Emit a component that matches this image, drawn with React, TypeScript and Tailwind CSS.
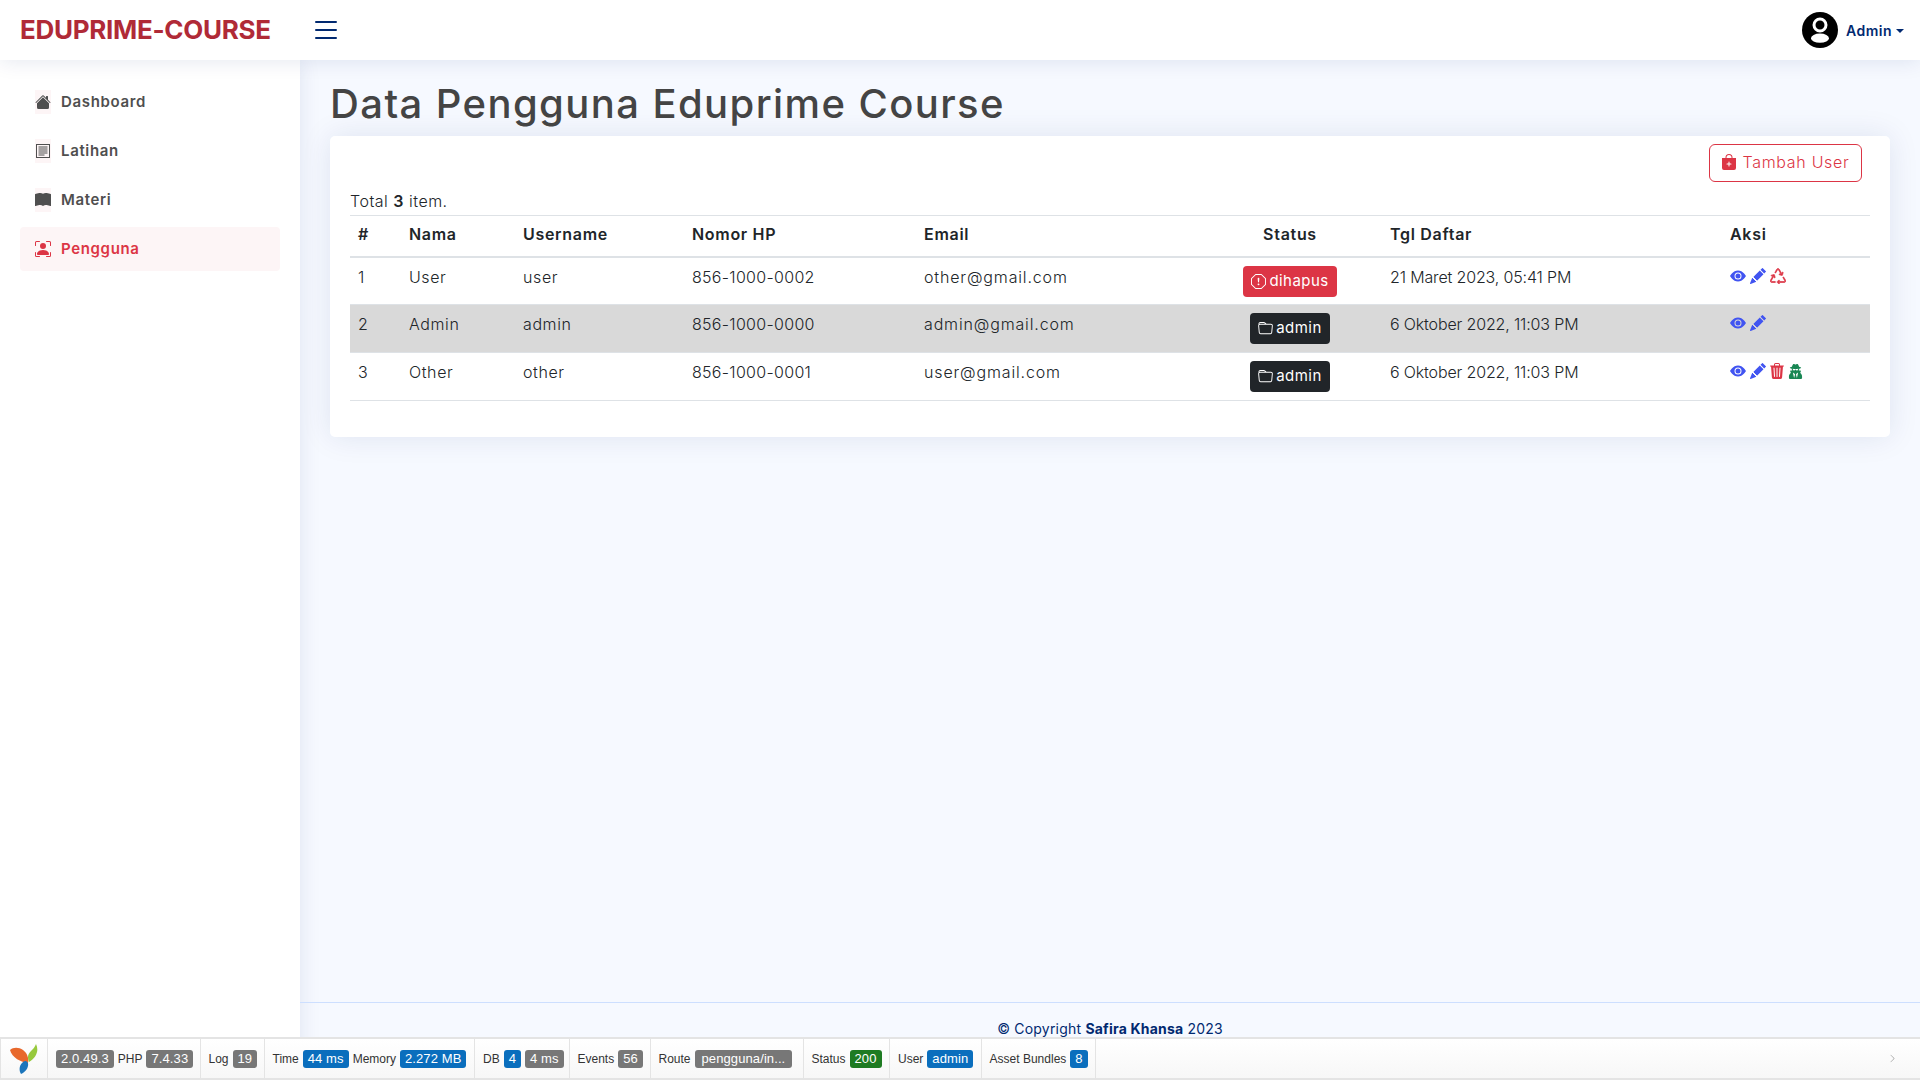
import {
  BsBagPlusFill,
  BsBookFill,
  BsChevronRight,
  BsEyeFill,
  BsExclamationOctagon,
  BsFolder,
  BsHouseFill,
  BsList,
  BsPencilFill,
  BsPersonBoundingBox,
  BsRecycle,
  BsTrash3Fill,
} from 'react-icons/bs';
import { FaUserSecret } from 'react-icons/fa';

function LatihanIcon({ className }: { className?: string }) {
  return (
    <svg viewBox="0 0 16 16" className={className} fill="none" stroke="currentColor">
      <rect x="1.5" y="1.5" width="13" height="13" strokeWidth="1" />
      <path d="M3.5 4h9M3.5 6h9M3.5 8h9M3.5 10h9M3.5 12h6" strokeWidth="1" />
    </svg>
  );
}

const menu = [
  { label: 'Dashboard', icon: BsHouseFill },
  { label: 'Latihan', icon: LatihanIcon },
  { label: 'Materi', icon: BsBookFill },
  { label: 'Pengguna', icon: BsPersonBoundingBox, active: true },
];

const rows = [
  { no: 1, nama: 'User', username: 'user', hp: '856-1000-0002', email: 'other@gmail.com', status: 'dihapus', tgl: '21 Maret 2023, 05:41 PM' },
  { no: 2, nama: 'Admin', username: 'admin', hp: '856-1000-0000', email: 'admin@gmail.com', status: 'admin', tgl: '6 Oktober 2022, 11:03 PM' },
  { no: 3, nama: 'Other', username: 'other', hp: '856-1000-0001', email: 'user@gmail.com', status: 'admin', tgl: '6 Oktober 2022, 11:03 PM' },
];

function YiiLogo() {
  return (
    <svg width="28" height="30" viewBox="0 0 28 30">
      <path d="M0 6 C3 3 9 3 13 6 C17 9 19 14 18 19 C11 18 2 14 0 6Z" fill="#e8682c" />
      <path d="M26 0 C29 6 27 13 19 18 C17 13 18 10 21 7 C23 5 25 3 26 0Z" fill="#97c93d" />
      <path d="M18 19 C19 24 15 28 11 30 C9 27 9 22 12 19 C14 17 16 16 18 19Z" fill="#1b75bb" />
    </svg>
  );
}

function UserAvatar() {
  return (
    <svg width="36" height="36" viewBox="0 0 36 36" className="shrink-0">
      <circle cx="18" cy="18" r="18" fill="#000000" />
      <circle cx="18" cy="13" r="6" fill="#000000" stroke="#ffffff" strokeWidth="3" />
      <ellipse cx="18" cy="26.2" rx="9" ry="4.6" fill="#ffffff" />
    </svg>
  );
}

function Badge({ color, wide, children }: { color: 'gray' | 'blue' | 'green'; wide?: boolean; children: React.ReactNode }) {
  const bg = color === 'gray' ? 'bg-[#777777]' : color === 'blue' ? 'bg-[#0a6ebd]' : 'bg-[#1e7b22]';
  return (
    <span className={`${bg} rounded-[3px] ${wide ? 'px-[7px]' : 'px-[5px]'} text-[13px] leading-[18px] text-white tracking-[0.1px]`}>
      {children}
    </span>
  );
}

function Block({ children, className = '' }: { children: React.ReactNode; className?: string }) {
  return <div className={`flex h-full shrink-0 items-center gap-[4px] border-r border-[#e4e4e4] pl-[8px] ${className}`}>{children}</div>;
}

export default function App() {
  return (
    <div className="relative flex h-screen flex-col overflow-hidden bg-[#f6f9ff] font-['Inter',sans-serif] text-[#444444]">
      <header className="relative z-10 flex h-[60px] shrink-0 items-center bg-white shadow-[0_2px_20px_rgba(1,41,112,0.1)]">
        <div className="ml-[20px] w-[290px] text-[26px] font-bold leading-none tracking-[-0.3px] text-[#b02a37]">EDUPRIME-COURSE</div>
        <BsList className="mt-[-1px] size-[32px] text-[#012970]" />
        <div className="ml-auto mr-[16px] flex items-center gap-[8px]">
          <UserAvatar />
          <span className="flex items-center gap-[4px] text-[14px] font-semibold tracking-[0.5px] text-[#012970]">
            Admin
            <span className="mt-[1px] border-x-[4px] border-t-[4px] border-x-transparent border-t-[#012970]" />
          </span>
        </div>
      </header>

      <div className="flex min-h-0 flex-1">
        <aside className="w-[300px] shrink-0 bg-white px-[20px] pt-[20px] shadow-[0_0_20px_rgba(1,41,112,0.1)]">
          <ul className="flex flex-col gap-[5px]">
            {menu.map((item) => {
              const Icon = item.icon;
              return (
                <li
                  key={item.label}
                  className={`flex h-[44px] items-center gap-[10px] rounded-[4px] px-[15px] text-[15px] font-semibold tracking-[0.65px] ${
                    item.active ? 'bg-[#fdf5f6] text-[#dc3545]' : 'text-[#4f4f4f]'
                  }`}
                >
                  <span className="flex h-[24px] w-[16px] shrink-0 items-center justify-center bg-[#fdf5f6]">
                    <Icon className="size-[16px]" />
                  </span>
                  {item.label}
                </li>
              );
            })}
          </ul>
        </aside>

        <main className="flex min-w-0 flex-1 flex-col">
          <div className="flex-1 px-[30px] pt-[21px]">
            <h1 className="text-[40px] font-medium leading-[46px] tracking-[1.4px] text-[#444444]">Data Pengguna Eduprime Course</h1>
            <section className="mt-[9px] h-[301px] rounded-[5px] bg-white px-[20px] shadow-[0_0_30px_rgba(1,41,112,0.1)]">
              <div className="flex justify-end pr-[8px] pt-[8px]">
                <button className="flex h-[38px] w-[153px] items-center justify-center gap-[5px] rounded-[6px] border border-[#dc3545] pb-[2px] text-[16px] font-light tracking-[0.7px] text-[#dc3545]">
                  <BsBagPlusFill className="size-[16px]" />
                  Tambah User
                </button>
              </div>
              <div className="mt-[7px] h-[26px] text-[16px] font-light leading-[24px] tracking-[0.5px] text-[#212529]">
                Total <b className="font-semibold">3</b> item.
              </div>
              <table className="w-full table-fixed border-collapse text-[16px] text-[#212529]">
                <colgroup>
                  <col className="w-[51px]" />
                  <col className="w-[114px]" />
                  <col className="w-[169px]" />
                  <col className="w-[232px]" />
                  <col className="w-[282px]" />
                  <col className="w-[184px]" />
                  <col className="w-[340px]" />
                  <col />
                </colgroup>
                <thead>
                  <tr className="h-[41px] border-t border-b-2 border-[#dee2e6] text-left tracking-[0.7px]">
                    <th className="px-[8px] pb-[4px] font-semibold">#</th>
                    <th className="px-[8px] pb-[4px] font-semibold">Nama</th>
                    <th className="px-[8px] pb-[4px] font-semibold">Username</th>
                    <th className="px-[8px] pb-[4px] font-semibold">Nomor HP</th>
                    <th className="px-[8px] pb-[4px] font-semibold">Email</th>
                    <th className="px-[8px] pb-[4px] text-center font-semibold">Status</th>
                    <th className="px-[8px] pb-[4px] font-semibold">Tgl Daftar</th>
                    <th className="px-[8px] pb-[4px] font-semibold">Aksi</th>
                  </tr>
                </thead>
                <tbody>
                  {rows.map((row) => (
                    <tr key={row.no} className={`h-[48px] border-b border-[#dee2e6] font-light ${row.no === 2 ? 'bg-[#d9d9d9]' : ''}`}>
                      <td className="px-[8px] pt-[7px] align-top">{row.no}</td>
                      <td className="px-[8px] pt-[7px] align-top tracking-[0.6px]">{row.nama}</td>
                      <td className="px-[8px] pt-[7px] align-top tracking-[0.6px]">{row.username}</td>
                      <td className="px-[8px] pt-[7px] align-top tracking-[0.3px]">{row.hp}</td>
                      <td className="px-[8px] pt-[7px] align-top tracking-[0.85px]">{row.email}</td>
                      <td className="px-[8px] pt-[8px] align-top">
                        <span
                          className={`mx-auto flex h-[31px] w-fit items-center gap-[3px] rounded-[4px] px-[8px] text-[15px] font-normal tracking-[0.45px] text-white ${
                            row.status === 'dihapus' ? 'bg-[#dc3545]' : 'bg-[#212529]'
                          }`}
                        >
                          {row.status === 'dihapus' ? <BsExclamationOctagon className="size-[15px]" /> : <BsFolder className="size-[15px]" />}
                          {row.status}
                        </span>
                      </td>
                      <td className="px-[8px] pt-[7px] align-top tracking-[-0.15px]">{row.tgl}</td>
                      <td className="px-[8px] pt-[10px] align-top">
                        <div className="flex items-center gap-[4px]">
                          <BsEyeFill className="size-[16px] text-[#4154f1]" />
                          <BsPencilFill className="size-[16px] text-[#4154f1]" />
                          {row.no === 1 && <BsRecycle className="size-[16px] text-[#dc3545]" stroke="currentColor" strokeWidth="0.7" />}
                          {row.no === 3 && <BsTrash3Fill className="ml-[-1px] size-[16px] text-[#dc3545]" />}
                          {row.no === 3 && <FaUserSecret className="ml-[-1px] size-[15px] text-[#198754]" />}
                        </div>
                      </td>
                    </tr>
                  ))}
                </tbody>
              </table>
            </section>
          </div>
          <footer className="mb-[43px] h-[35px] border-t border-[#cddfff] pt-[16px] text-center text-[14px] leading-[20px] tracking-[0.2px] text-[#012970]">
            © Copyright <b className="font-bold">Safira Khansa</b> 2023
          </footer>
        </main>
      </div>

      <div className="absolute inset-x-0 bottom-0 z-20 flex h-[43px] items-center border-y-2 border-[#e4e4e4] bg-gradient-to-b from-white to-[#f7f7f7] font-['Liberation_Sans',sans-serif] text-[12px] text-[#333333]">
        <div className="flex h-full w-[48px] shrink-0 items-center justify-center border-x border-[#e4e4e4]"><YiiLogo /></div>
        <Block className="w-[152.5px]"><Badge color="gray">2.0.49.3</Badge>PHP<Badge color="gray">7.4.33</Badge></Block>
        <Block className="w-[64px]">Log<Badge color="gray">19</Badge></Block>
        <Block className="w-[210.5px]">Time<Badge color="blue">44 ms</Badge>Memory<Badge color="blue">2.272 MB</Badge></Block>
        <Block className="w-[94.5px]">DB<Badge color="blue">4</Badge><Badge color="gray">4 ms</Badge></Block>
        <Block className="w-[81px]">Events<Badge color="gray">56</Badge></Block>
        <Block className="w-[153px]">Route<Badge color="gray" wide>pengguna/in...</Badge></Block>
        <Block className="w-[86.5px]">Status<Badge color="green">200</Badge></Block>
        <Block className="w-[91.6px]">User<Badge color="blue">admin</Badge></Block>
        <Block className="w-[114px]">Asset Bundles<Badge color="blue">8</Badge></Block>
        <BsChevronRight className="ml-auto mr-[23px] size-[9px] text-[#999999]" />
      </div>
    </div>
  );
}
